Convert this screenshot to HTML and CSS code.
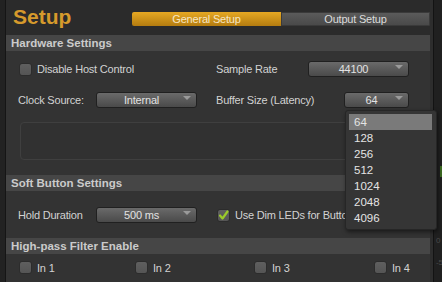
FILE: index.html
```html
<!DOCTYPE html>
<html lang="en">
<head>
    <meta charset="UTF-8">
    <title>Setup</title>
    <link rel="stylesheet" href="styles.css">
</head>
<body>
    <div class="edge"></div>

    <div class="main">
        <div class="topbar">
            <h1 class="title">Setup</h1>
            <div class="tabs">
                <div class="tab active">General Setup</div>
                <div class="tab">Output Setup</div>
            </div>
        </div>

        <!-- Hardware -->
        <div class="section-head">Hardware Settings</div>
        <div class="section-body hw">
            <div class="row">
                <div class="cell-left">
                    <label class="check"><span class="box"></span>Disable Host Control</label>
                </div>
                <div class="cell-right">
                    <span class="label">Sample Rate</span>
                    <div class="select wide">44100</div>
                </div>
            </div>
            <div class="row">
                <div class="cell-left">
                    <span class="label fixed">Clock Source:</span>
                    <div class="select wide">Internal</div>
                </div>
                <div class="cell-right">
                    <span class="label">Buffer Size (Latency)</span>
                    <div class="select narrow">64</div>
                </div>
            </div>
            <div class="inset"></div>
        </div>

        <!-- Soft buttons -->
        <div class="section-head">Soft Button Settings</div>
        <div class="section-body soft">
            <div class="row">
                <div class="cell-left">
                    <span class="label fixed">Hold Duration</span>
                    <div class="select wide">500 ms</div>
                </div>
                <div class="cell-right clipped">
                    <label class="check">
                        <span class="box">
                            <svg width="13" height="13" viewBox="0 0 13 13"><path d="M3 6.5 L5.5 9.5 L10.5 2.5" fill="none" stroke="#9bcb2a" stroke-width="2.2" stroke-linecap="round" stroke-linejoin="round"/></svg>
                        </span>Use Dim LEDs for Button Backlight
                    </label>
                </div>
            </div>
        </div>

        <!-- High pass -->
        <div class="section-head">High-pass Filter Enable</div>
        <div class="section-body hp">
            <label class="check"><span class="box"></span>In 1</label>
            <label class="check"><span class="box"></span>In 2</label>
            <label class="check"><span class="box"></span>In 3</label>
            <label class="check"><span class="box"></span>In 4</label>
        </div>
    </div>

    <div class="meter">
        <span class="tick t0">0</span>
        <span class="tick t5">-5</span>
        <span class="led"></span>
    </div>

    <ul class="dropdown">
        <li class="sel">64</li>
        <li>128</li>
        <li>256</li>
        <li>512</li>
        <li>1024</li>
        <li>2048</li>
        <li>4096</li>
    </ul>
</body>
</html>
```

FILE: styles.css
```css
body {
    margin: 0;
    width: 442px;
    height: 282px;
    overflow: hidden;
    display: flex;
    background: #1d1d1d;
    font-family: "Liberation Sans", Arial, sans-serif;
    font-size: 11px;
    letter-spacing: -0.2px;
    color: #d2d2d2;
}

.edge {
    width: 5px;
    border-right: 1px solid #151515;
    background: #222;
}

.main {
    width: 424px;
    background: #2b2b2b;
    display: flex;
    flex-direction: column;
}

.topbar {
    height: 35px;
    display: flex;
    align-items: center;
}

.title {
    margin: 0 0 1px 7px;
    width: 119px;
    font-size: 21px;
    font-weight: bold;
    letter-spacing: 0;
    color: #d69a2c;
}

.tabs {
    flex: 1;
    display: flex;
    height: 14px;
    margin-top: 3px;
    border-radius: 2px;
    overflow: hidden;
}

.tab {
    flex: 1;
    display: flex;
    align-items: center;
    justify-content: center;
    background: linear-gradient(#5c5c5c, #484848);
    color: #dcdcdc;
    box-shadow: inset 0 0 0 1px #3a3a3a;
}

.tab.active {
    background: linear-gradient(#e6a823, #b47c10);
    color: #f6e6c4;
    box-shadow: none;
}

.section-head {
    height: 16px;
    line-height: 16px;
    padding-left: 5px;
    background: #464646;
    color: #cbcbcb;
    font-weight: bold;
    font-size: 11.5px;
    letter-spacing: 0;
}

.section-body {
    background: #333;
    display: flex;
    flex-direction: column;
}

.hw {
    padding: 10px 0 15px;
    gap: 15px;
}

.soft {
    padding: 16px 0 15px;
}

.row {
    height: 16px;
    display: flex;
    align-items: center;
    padding-left: 12px;
}

.cell-left {
    width: 198px;
    display: flex;
    align-items: center;
}

.cell-right {
    width: 193px;
    display: flex;
    align-items: center;
    white-space: nowrap;
}

/* the open list covers the end of this label */
.cell-right.clipped {
    width: 129px;
    overflow: hidden;
}

.label.fixed {
    width: 78px;
}

.select {
    height: 14px;
    line-height: 14px;
    border: 1px solid #202020;
    border-radius: 3px;
    background: linear-gradient(#6a6a6a, #4a4a4a);
    color: #e2e2e2;
    text-align: center;
    padding-right: 10px;
    position: relative;
    box-sizing: content-box;
}

.select::after {
    content: "";
    position: absolute;
    right: 5px;
    top: 3px;
    border-left: 4px solid transparent;
    border-right: 4px solid transparent;
    border-top: 4px solid #9a9a9a;
}

.select.wide {
    width: 89px;
}

.cell-right .select {
    margin-left: auto;
}

.select.narrow {
    width: 53px;
}

.inset {
    height: 36px;
    margin: -1px 14px 0;
    border: 1px solid #3f3f3f;
    border-radius: 4px;
    background: #313131;
}

.check {
    display: flex;
    align-items: center;
    gap: 5px;
    margin-left: 1px;
    white-space: nowrap;
}

.box {
    flex: none;
    width: 11px;
    height: 11px;
    border: 1px solid #2c2c2c;
    border-radius: 3px;
    background: linear-gradient(#5f5f5f, #555);
    position: relative;
}

.box svg {
    position: absolute;
    left: -1px;
    top: -1px;
}

.hp {
    flex: 1;
    display: grid;
    grid-template-columns: 116px 119px 120px auto;
    align-content: start;
    padding: 7px 0 0 12px;
}

.meter {
    flex: 1;
    position: relative;
    background: #202020;
    border-left: 3px solid #2d2d2d;
}

.meter::before {
    content: "";
    position: absolute;
    left: 0;
    top: 0;
    bottom: 0;
    width: 1px;
    background: #131313;
}

.tick {
    position: absolute;
    left: 3px;
    font-size: 8px;
    color: #4a4a4a;
}

.t0 { top: 236px; }
.t5 { top: 258px; }

.led {
    position: absolute;
    right: 0;
    top: 166px;
    width: 2px;
    height: 11px;
    background: #3c6a22;
}

.dropdown {
    position: absolute;
    left: 345px;
    top: 110px;
    width: 83px;
    height: 112px;
    margin: 0;
    padding: 3px 4px 3px 3px;
    list-style: none;
    background: #353535;
    border: 1px solid #262626;
    border-radius: 3px;
    box-shadow: 1px 2px 4px rgba(0, 0, 0, 0.5);
    color: #e4e4e4;
    font-size: 11.5px;
    letter-spacing: 0;
}

.dropdown li {
    height: 16px;
    line-height: 16px;
    padding-left: 5px;
}

.dropdown li.sel {
    background: #7a7a7a;
}
```
